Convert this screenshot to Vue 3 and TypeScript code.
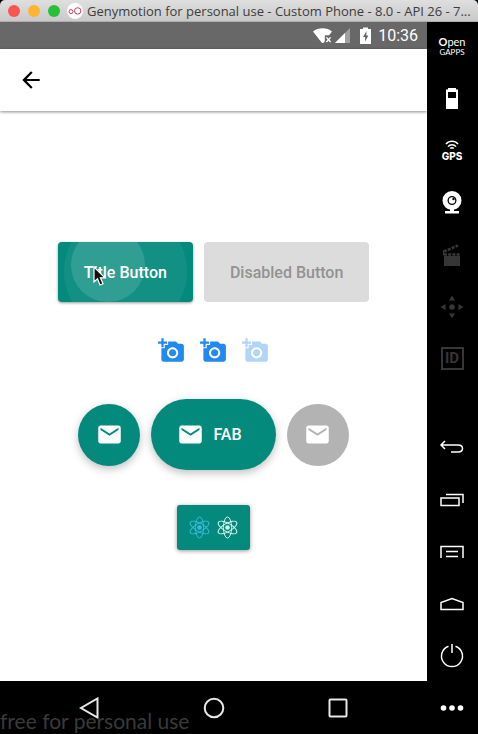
<script setup lang="ts">
import { ref } from 'vue'

const windowTitle = 'Genymotion for personal use - Custom Phone - 8.0 - API 26 - 7...'
const clock = '10:36'
const ADD_PHOTO =
  'M3 4V1h2v3h3v2H5v3H3V6H0V4h3zm3 6V7h3V4h7l1.83 2H21c1.1 0 2 .9 2 2v12c0 1.1-.9 2-2 2H5c-1.1 0-2-.9-2-2V10h3zm7 9c2.76 0 5-2.24 5-5s-2.24-5-5-5-5 2.24-5 5 2.24 5 5 5zm-3.2-5c0 1.77 1.43 3.2 3.2 3.2s3.2-1.43 3.2-3.2-1.43-3.2-3.2-3.2-3.2 1.43-3.2 3.2z'
const MAIL =
  'M20 4H4c-1.1 0-1.99.9-1.99 2L2 18c0 1.1.9 2 2 2h16c1.1 0 2-.9 2-2V6c0-1.1-.9-2-2-2zm0 4l-8 5-8-5V6l8 5 8-5v2z'
const photoButtons = ref([
  { label: 'Add photo', disabled: false },
  { label: 'Add another photo', disabled: false },
  { label: 'Add photo unavailable', disabled: true },
])
const atoms = ['blue', 'white']
</script>

<template>
  <div class="window">
    <header class="titlebar">
      <div class="lights">
        <button class="light red" aria-label="Close"></button>
        <button class="light amber" aria-label="Minimize"></button>
        <button class="light green" aria-label="Zoom"></button>
      </div>
      <svg class="logo" viewBox="0 0 16 16" aria-hidden="true">
        <circle cx="8" cy="8" r="8" fill="#fff" />
        <g fill="none" stroke="#c8405f" stroke-width="1">
          <circle cx="4" cy="8.600" r="2" />
          <circle cx="10.700" cy="7.900" r="3.200" />
        </g>
      </svg>
      <h1 class="title">{{ windowTitle }}</h1>
    </header>

    <div class="body">
      <main class="phone">
        <div class="status">
          <svg width="20" height="18" viewBox="0 0 20 18" aria-hidden="true">
            <path d="M0 4.5C5 .2 14 .2 19 4.5L16 8.2h-4.2v6L10.4 16H9z" fill="#fff" />
            <path d="M13.4 10.4l4.2 4.6M17.6 10.4l-4.2 4.6" stroke="#fff" stroke-width="1.4" />
          </svg>
          <svg width="16" height="18" viewBox="0 0 16 18" aria-hidden="true">
            <path d="M0 16L15 1v15z" fill="#a0a0a0" />
            <path d="M0 16l10-10v10z" fill="#fff" />
          </svg>
          <svg class="charge" width="11" height="18" viewBox="0 0 11 18" aria-hidden="true">
            <path d="M3 .5h5v1.500h3V17H0V2h3z" fill="#fff" />
            <path d="M6.500 4L3 10h2.100v4.500l3.300-6H6.300z" fill="#666" />
          </svg>
          <time class="clock">{{ clock }}</time>
        </div>

        <nav class="appbar">
          <button class="plain" aria-label="Go back">
            <svg width="26" height="26" viewBox="0 0 24 24">
              <path d="M20 11H7.830l5.590-5.590L12 4l-8 8 8 8 1.410-1.410L7.830 13H20v-2z" fill="#000" />
            </svg>
          </button>
        </nav>

        <section class="content">
          <div class="row">
            <button class="raised active">
              <span>Title Button</span>
              <svg class="cursor" width="14" height="21" viewBox="0 0 14 21" aria-hidden="true">
                <path d="M1 1v15l3.500-3.200L7 19l3-1.300-2.600-5.900H12z" fill="#111" stroke="#fff" stroke-width="1.200" />
              </svg>
            </button>
            <button class="raised" disabled><span>Disabled Button</span></button>
          </div>

          <div class="row photos">
            <button
              v-for="item in photoButtons"
              :key="item.label"
              class="plain photo"
              :aria-label="item.label"
              :disabled="item.disabled"
            >
              <svg width="27" height="27" viewBox="0 0 24 24"><path :d="ADD_PHOTO" fill="currentColor" /></svg>
            </button>
          </div>

          <div class="row">
            <button class="fab" aria-label="Mail">
              <svg width="27" height="27" viewBox="0 0 24 24"><path :d="MAIL" fill="#fff" /></svg>
            </button>
            <button class="fab extended">
              <svg width="27" height="27" viewBox="0 0 24 24"><path :d="MAIL" fill="#fff" /></svg>
              <span>FAB</span>
            </button>
            <button class="fab" aria-label="Mail unavailable" disabled>
              <svg width="27" height="27" viewBox="0 0 24 24"><path :d="MAIL" fill="#fff" /></svg>
            </button>
          </div>

          <button class="react" aria-label="React">
            <svg v-for="tone in atoms" :key="tone" :class="tone" width="23" height="23" viewBox="-12 -12 24 24">
              <g fill="none" stroke="currentColor" stroke-width="1">
                <ellipse rx="4.300" ry="11" />
                <ellipse rx="4.300" ry="11" transform="rotate(60)" />
                <ellipse rx="4.300" ry="11" transform="rotate(-60)" />
              </g>
              <circle r="2.400" fill="currentColor" />
            </svg>
          </button>
        </section>

        <nav class="navbar">
          <button class="plain" aria-label="Back">
            <svg width="22" height="22" viewBox="0 0 22 22"><path d="M18.500 1.500v19L2 11z" /></svg>
          </button>
          <button class="plain" aria-label="Home">
            <svg width="22" height="22" viewBox="0 0 22 22"><circle cx="11" cy="11" r="9.300" /></svg>
          </button>
          <button class="plain" aria-label="Overview">
            <svg width="22" height="22" viewBox="0 0 22 22"><rect x="2.500" y="2.500" width="17" height="17" rx="1" /></svg>
          </button>
        </nav>
      </main>

      <aside class="tools">
        <div class="group top">
          <button class="tool gapps"><span><b>O</b>pen</span><small>GAPPS</small></button>
          <button class="tool" aria-label="Battery">
            <svg width="26" height="26" viewBox="0 0 26 26">
              <path d="M9 3h8v1.500h2V24H7V4.500h2zM9 7v6h8V7z" fill="#fff" fill-rule="evenodd" />
            </svg>
          </button>
          <button class="tool gps">
            <svg width="14" height="10" viewBox="0 0 14 10" aria-hidden="true">
              <g fill="none" stroke="#fff" stroke-width="1.500">
                <path d="M1 4C4 .4 10 .4 13 4M3 6.600c2-2.600 6-2.600 8 0" />
                <path d="M5.300 8.600c1-1.200 2.400-1.200 3.400 0" />
              </g>
            </svg>
            <span>GPS</span>
          </button>
          <button class="tool" aria-label="Camera">
            <svg width="26" height="26" viewBox="0 0 26 26">
              <circle cx="13" cy="11.500" r="7" fill="none" stroke="#fff" stroke-width="5" />
              <circle cx="13" cy="11.500" r="3.200" fill="#fff" />
              <circle cx="14.500" cy="10" r="1.200" fill="#000" />
              <path d="M11 20h4v2h5v2.500H6V22h5z" fill="#fff" />
            </svg>
          </button>
          <button class="tool" aria-label="Screen capture" disabled>
            <svg width="26" height="26" viewBox="0 0 26 26">
              <path d="M5 15h16v10H5z" fill="#363636" />
              <path d="M5 10.500L19 4.500M5 13.500h16" stroke="#363636" stroke-width="2.600" stroke-dasharray="3 1.200" />
              <path d="M4.500 9.500v5" stroke="#363636" />
            </svg>
          </button>
          <button class="tool" aria-label="Move" disabled>
            <svg width="26" height="26" viewBox="0 0 26 26">
              <path d="M13 2.500l3 5h-6zM13 25.500l3-5h-6zM1.500 14l5-3v6zM24.500 14l-5-3v6z" fill="#363636" />
              <circle cx="13" cy="14" r="2.800" fill="#363636" />
            </svg>
          </button>
          <button class="tool" disabled><span class="ident">ID</span></button>
        </div>

        <div class="group bottom">
          <button class="tool" aria-label="Device back">
            <svg width="26" height="26" viewBox="0 0 26 26">
              <path d="M6 6L2 10l4 4M2 10h17c6 0 6 7 0 7h-7" />
            </svg>
          </button>
          <button class="tool" aria-label="Recent apps">
            <svg width="26" height="26" viewBox="0 0 26 26">
              <path d="M2 11h18v7.500H2zM7 7.500h17V16" />
            </svg>
          </button>
          <button class="tool" aria-label="Menu">
            <svg width="26" height="26" viewBox="0 0 26 26">
              <path d="M2 19V7.500h22V19M7 12.500h12M7 17.500h12" />
            </svg>
          </button>
          <button class="tool" aria-label="Device home">
            <svg width="26" height="26" viewBox="0 0 26 26">
              <path d="M2 18.500v-7l11-4 11 4v7z" />
            </svg>
          </button>
          <button class="tool" aria-label="Power">
            <svg width="26" height="26" viewBox="0 0 26 26">
              <path d="M9.500 3.200a10.500 10.500 0 1 0 7 0M13 1v9" />
            </svg>
          </button>
          <button class="tool" aria-label="More">
            <svg width="26" height="26" viewBox="0 0 26 26">
              <g fill="#fff" stroke="none">
                <circle cx="4.500" cy="13" r="2.800" />
                <circle cx="13" cy="13" r="2.800" />
                <circle cx="21.500" cy="13" r="2.800" />
              </g>
            </svg>
          </button>
        </div>
      </aside>
    </div>
    <p class="license">free for personal use</p>
  </div>
</template>

<style>
body {
  background: #000;
}
</style>

<style scoped>
.window {
  position: relative;
  display: flex;
  flex-direction: column;
  min-height: 100vh;
  font-family: Roboto, sans-serif;
  background: #000;
}
button {
  margin: 0;
  padding: 0;
  border: 0;
  font: inherit;
  color: inherit;
  background: none;
}
svg {
  display: block;
  flex: none;
}
.titlebar {
  display: flex;
  align-items: center;
  height: 22px;
  padding: 0 8px;
  box-sizing: border-box;
  border-radius: 5px 5px 0 0;
  border-bottom: 1px solid #aeaeae;
  background: linear-gradient(#dfdfdf, #c9c9c9);
}
.lights {
  display: flex;
  gap: 8px;
}
.light {
  width: 12px;
  height: 12px;
  border-radius: 50%;
}
.red {
  background: #fb5550;
}
.amber {
  background: #fdb52d;
}
.green {
  background: #25c138;
}
.logo {
  width: 16px;
  height: 16px;
  margin: 0 4px 0 7px;
}
.title {
  margin: 0;
  font-family: 'Open Sans', sans-serif;
  font-size: 13px;
  font-weight: 400;
  line-height: 20px;
  white-space: nowrap;
  color: #3c3c3c;
}
.body {
  display: flex;
  flex: 1;
}
.phone {
  display: flex;
  flex: 1;
  flex-direction: column;
  min-width: 0;
  background: #fff;
}
.status {
  display: flex;
  align-items: center;
  justify-content: flex-end;
  gap: 2px;
  height: 27px;
  padding-right: 9px;
  background: #686868;
}
.charge {
  margin: 0 5px 0 7px;
}
.clock {
  font-size: 16px;
  line-height: 27px;
  color: #fff;
}
.appbar {
  display: flex;
  align-items: center;
  height: 62px;
  padding-left: 18px;
  box-shadow: 0 1px 3px rgba(0, 0, 0, 0.45);
}
.content {
  display: flex;
  flex: 1;
  flex-direction: column;
  align-items: center;
  justify-content: center;
  gap: 35px;
}
.row {
  display: flex;
  align-items: center;
  gap: 11px;
}
.photos {
  gap: 15px;
}
.photo {
  color: #2189f0;
}
.photo:disabled {
  color: #b0d5f9;
}
.raised {
  position: relative;
  height: 60px;
  padding: 0 26px;
  overflow: hidden;
  border-radius: 4px;
  font-size: 16px;
  font-weight: 500;
  background: #dcdcdc;
  color: #929292;
}
.active {
  background: #048a7c;
  color: #fff;
  box-shadow: 0 1px 3px rgba(0, 0, 0, 0.4);
}
.active span {
  position: relative;
  z-index: 1;
}
.active::before,
.active::after {
  position: absolute;
  border-radius: 50%;
  content: '';
}
.active::before {
  top: -32px;
  left: 6px;
  width: 123px;
  height: 123px;
  background: rgba(255, 255, 255, 0.06);
}
.active::after {
  top: -14px;
  left: 13px;
  width: 74px;
  height: 74px;
  background: rgba(255, 255, 255, 0.13);
}
.cursor {
  position: absolute;
  top: 24px;
  left: 35px;
  z-index: 2;
}
.fab {
  display: flex;
  align-items: center;
  justify-content: center;
  gap: 9px;
  width: 62px;
  height: 62px;
  border-radius: 36px;
  background: #048a7c;
  box-shadow: 0 3px 8px rgba(0, 0, 0, 0.25);
  font-size: 16px;
  font-weight: 500;
  color: #fff;
}
.extended {
  width: auto;
  height: 71px;
  padding: 0 34px 0 26px;
}
.fab:disabled {
  background: #b3b3b3;
  box-shadow: none;
}
.react {
  display: flex;
  gap: 5px;
  padding: 11px;
  border-radius: 3px;
  background: #048a7c;
  box-shadow: 0 1px 4px rgba(0, 0, 0, 0.4);
}
.blue {
  color: #3cb8df;
}
.white {
  color: #d9f5ee;
}
.navbar {
  display: flex;
  align-items: center;
  justify-content: center;
  gap: 102px;
  height: 53px;
  background: #000;
}
.navbar svg {
  fill: none;
  stroke: #e8e8e8;
  stroke-width: 2;
}
.tools {
  display: flex;
  flex-direction: column;
  justify-content: space-between;
  box-sizing: border-box;
  width: 51px;
  padding-right: 1px;
  background: #000;
  color: #fff;
}
.group {
  display: flex;
  flex-direction: column;
}
.top {
  gap: 4px;
}
.tool {
  display: flex;
  flex-direction: column;
  align-items: center;
  justify-content: center;
  height: 48px;
}
.bottom .tool {
  height: 52px;
}
.bottom svg {
  fill: none;
  stroke: #fff;
  stroke-width: 1.5;
}
.gapps {
  font-family: Lato, sans-serif;
  font-size: 11px;
  line-height: 12px;
}
.gapps small {
  font-size: 8px;
  line-height: 8px;
}
.gps {
  gap: 1px;
  font-family: Inter, sans-serif;
  font-size: 10px;
  font-weight: 800;
  line-height: 10px;
}
.ident {
  width: 19px;
  border: 2px solid #363636;
  font-size: 15px;
  font-weight: 700;
  line-height: 19px;
  color: #363636;
}
.license {
  position: absolute;
  bottom: 0;
  left: 0;
  margin: 0;
  font-family: Lato, sans-serif;
  font-size: 21px;
  line-height: 26px;
  color: #3a3a3a;
}
</style>
